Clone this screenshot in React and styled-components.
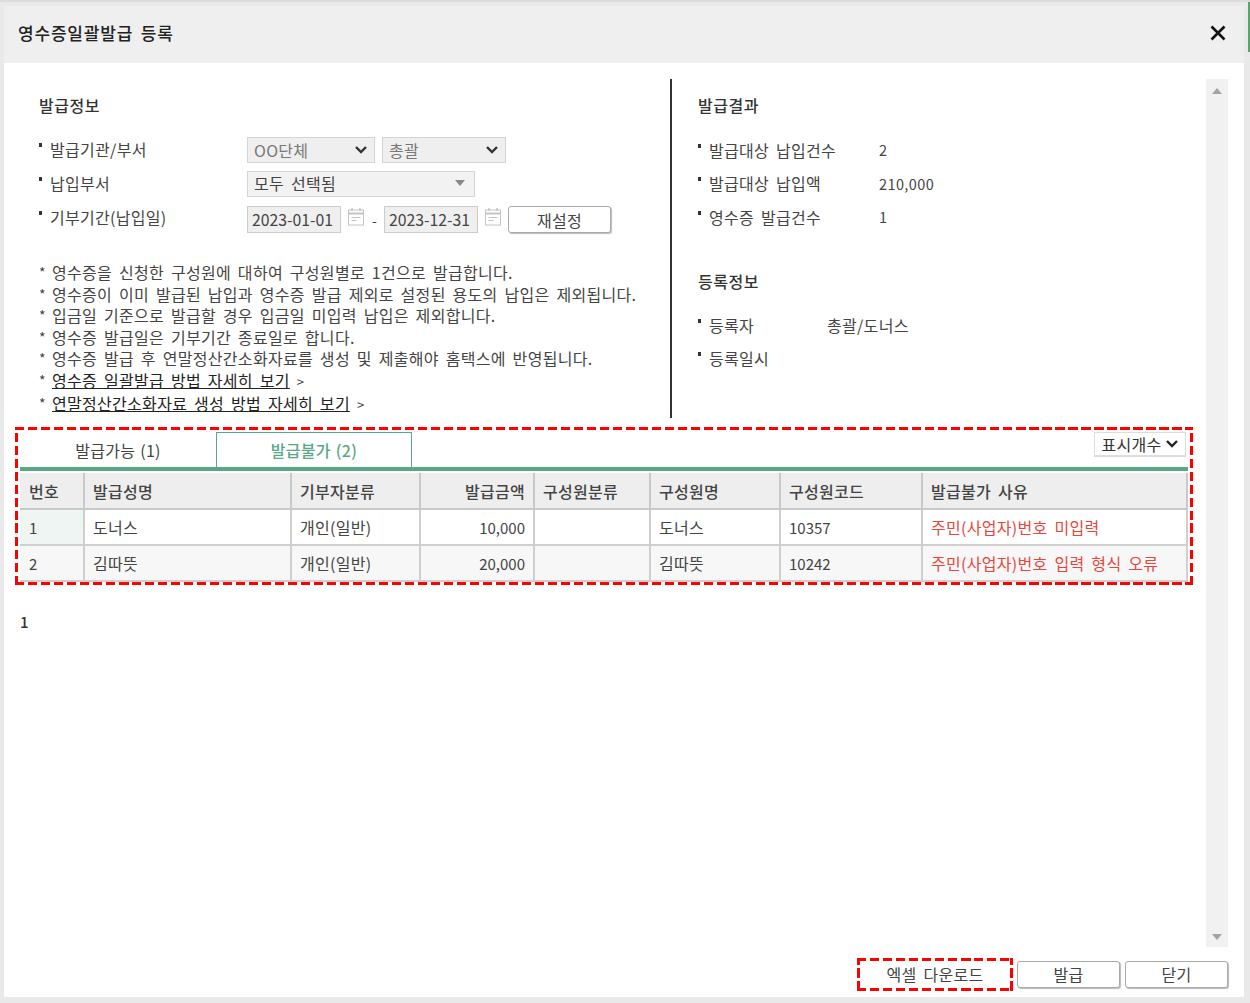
import React from "react";
import styled, { createGlobalStyle, css } from "styled-components";

const Global = createGlobalStyle`
  html, body { margin: 0; padding: 0; background: #e9e9e9; }
  body { font-family: "Noto Sans CJK KR", "Noto Sans", sans-serif; color: #333; }
  * { box-sizing: border-box; }
`;

// reference text is wider than Noto, so spread it a little
const koText = css`
  font-size: 16px;
  letter-spacing: 0.3px;
  word-spacing: 3px;
`;

// the red marker frame drawn over a block; long dashes that css dashed can't do
const redFrame = css`
  position: relative;
  &::after {
    content: "";
    position: absolute;
    inset: -3px;
    pointer-events: none;
    background:
      repeating-linear-gradient(90deg, #f00 0 9.5px, transparent 9.5px 13px) top / 100% 3px no-repeat,
      repeating-linear-gradient(90deg, #f00 0 9.5px, transparent 9.5px 13px) bottom / 100% 3px no-repeat,
      repeating-linear-gradient(0deg, #f00 0 9.5px, transparent 9.5px 13px) left / 3px 100% no-repeat,
      repeating-linear-gradient(0deg, #f00 0 9.5px, transparent 9.5px 13px) right / 3px 100% no-repeat;
  }
`;

const Page = styled.div`
  width: 1250px;
  height: 1003px;
  padding: 6px 6px 4px 4px;
  position: relative;
  overflow: hidden;
  border-top: 2px solid #dcdcdc;
`;

const EdgeMark = styled.div`
  position: absolute;
  top: 0;
  right: 0;
  width: 2px;
  height: 50px;
  background: #5aa469;
`;

const Modal = styled.div`
  height: 100%;
  background: #fff;
  display: flex;
  flex-direction: column;
  margin-top: -2px;
`;

const Header = styled.div`
  height: 57px;
  flex: none;
  background: #efefef;
  display: flex;
  align-items: center;
  justify-content: space-between;
  padding: 0 17px 4px 14px;
`;

const ModalTitle = styled.h1`
  margin: 0;
  font-size: 17px;
  letter-spacing: 0.8px;
  word-spacing: 3px;
  font-weight: 500;
  color: #222;
`;

const CloseBtn = styled.button`
  border: 0;
  background: none;
  padding: 0;
  width: 18px;
  height: 18px;
  display: flex;
`;

const Body = styled.div`
  flex: 1;
  display: flex;
  padding: 16px 16px 0 11px;
  min-height: 0;
`;

const Content = styled.div`
  flex: 1;
  min-width: 0;
  display: flex;
  flex-direction: column;
`;

const Top = styled.div`
  height: 339px;
  flex: none;
  display: flex;
`;

const LeftPane = styled.div`
  width: 657px;
  padding: 15px 0 0 24px;
  border-right: 2px solid #333;
`;

const RightPane = styled.div`
  flex: 1;
  padding: 15px 0 0 26px;
`;

const SectionTitle = styled.h2`
  margin: ${({ $mt }) => $mt || 0}px 0 0;
  font-size: 16px;
  letter-spacing: 0.5px;
  line-height: 22px;
  font-weight: 500;
  color: #333;
`;

const FormRows = styled.div`
  margin-top: ${({ $mt }) => $mt || 17}px;
  display: flex;
  flex-direction: column;
`;

const FormRow = styled.div`
  height: ${({ $h }) => $h || 34}px;
  display: flex;
  align-items: center;
`;

const Label = styled.div`
  ${koText}
  width: ${({ $w }) => $w || 208}px;
  flex: none;
  color: #444;
  padding: 0 0 ${({ $up }) => $up ?? 2}px 11px;
  position: relative;
  white-space: nowrap;
  &::before {
    content: "";
    position: absolute;
    left: 0;
    top: 6px;
    width: 3px;
    height: 4px;
    background: #333;
  }
`;

const Value = styled.div`
  font-size: 14.5px;
  letter-spacing: 0.4px;
  color: #444;
  white-space: nowrap;
`;

const NameValue = styled(Value)`
  ${koText}
`;

const SelectBox = styled.div`
  ${koText}
  width: ${({ $w }) => $w}px;
  height: 26px;
  margin-right: ${({ $mr }) => $mr || 0}px;
  border: 1px solid #d4d4d4;
  background: ${({ $dim }) => ($dim ? "#efefef" : "#f2f2f2")};
  color: ${({ $dim }) => ($dim ? "#777" : "#444")};
  display: flex;
  align-items: center;
  justify-content: space-between;
  padding: 0 6px ${({ $dim }) => ($dim ? 1 : 2)}px;
`;

const DateInput = styled.div`
  width: 94px;
  height: 27px;
  border: 1px solid #ccc;
  background: #efefef;
  color: #444;
  font-size: 15.8px;
  display: flex;
  align-items: center;
  padding-left: 4px;
`;

const Dash = styled.span`
  width: 19px;
  text-align: center;
  font-size: 14px;
  color: #444;
`;

const CalIcon = styled.svg`
  width: 18px;
  height: 20px;
  margin: -6px 0 0 6px;
  flex: none;
`;

const Btn = styled.button`
  ${koText}
  width: ${({ $w }) => $w}px;
  height: 27px;
  font-family: inherit;
  color: #444;
  background: #fff;
  border: 1px solid #aaa;
  border-radius: 3px;
  box-shadow: 1px 1px 1px #bbb;
  padding: 0;
`;

const ResetBtn = styled(Btn)`
  margin-left: 6px;
`;

const Notes = styled.ul`
  ${koText}
  list-style: none;
  margin: 24px 0 0;
  padding: 0;
  line-height: 21.6px;
  color: #444;
`;

const Note = styled.li`
  white-space: nowrap;
  padding-left: 13px;
  position: relative;
  &::before {
    content: "*";
    position: absolute;
    left: 0;
    font-size: 14px;
  }
`;

const NoteLink = styled.a`
  color: #222;
  text-decoration: underline;
`;

const Gt = styled.span`
  margin-left: 7px;
  font-size: 13px;
`;

const TableSection = styled.div`
  ${redFrame}
  margin: 12px 0 0 3px;
  width: 1172px;
  height: 152px;
  flex: none;
  padding: 2px 2px 0;
`;

const TabBar = styled.div`
  display: flex;
  align-items: flex-start;
  height: 39px;
  border-bottom: 4px solid #5aa786;
  position: relative;
`;

const Tab = styled.div`
  ${koText}
  word-spacing: 1px;
  width: ${({ $w }) => $w}px;
  height: 35px;
  display: flex;
  align-items: center;
  justify-content: center;
  color: ${({ $active }) => ($active ? "#5aa786" : "#444")};
  font-weight: ${({ $active }) => ($active ? 500 : 400)};
  border: ${({ $active }) => ($active ? "1px solid #5aa786" : "0")};
  border-bottom: 0;
`;

const CountSelect = styled.div`
  ${koText}
  position: absolute;
  right: 2px;
  top: 0;
  width: 92px;
  height: 25px;
  border: 1px solid #ddd;
  border-bottom-width: 2px;
  color: #333;
  display: flex;
  align-items: center;
  justify-content: center;
  gap: 3px;
`;

const Table = styled.table`
  border-collapse: collapse;
  table-layout: fixed;
  width: 1167px;
  margin-top: 2px;
`;

const Th = styled.th`
  ${koText}
  height: 36px;
  background: #eeeeee;
  border: 1px solid #c9c9c9;
  border-width: 0 2px 2px 0;
  font-weight: 500;
  color: #444;
  padding: 0 8px;
  text-align: ${({ $right }) => ($right ? "right" : "left")};
  white-space: nowrap;
  &:first-child { padding-left: 9px; }
`;

const Td = styled.td`
  ${koText}
  ${({ $num }) => $num && "font-size: 15px; letter-spacing: 0;"}
  height: 36px;
  border: 1px solid #cfcfcf;
  border-width: 0 2px 2px 0;
  background: ${({ $bg }) => $bg || "transparent"};
  color: ${({ $red }) => ($red ? "#e8453c" : "#444")};
  padding: 0 8px;
  text-align: ${({ $right }) => ($right ? "right" : "left")};
  white-space: nowrap;
  &:first-child { padding-left: 9px; }
`;

const Row = styled.tr`
  background: ${({ $alt }) => ($alt ? "#f7f7f7" : "#fff")};
`;

const Pager = styled.div`
  margin: 29px 0 0 5px;
  font-size: 15px;
  font-weight: 500;
  color: #333;
`;

const ScrollTrack = styled.div`
  width: 22px;
  flex: none;
  height: 868px;
  background: #f1f1f1;
  display: flex;
  flex-direction: column;
  justify-content: space-between;
  align-items: center;
  padding: 9px 0 7px;
`;

const Arrow = styled.div`
  width: 0;
  height: 0;
  border-left: 5px solid transparent;
  border-right: 5px solid transparent;
  ${({ $up }) =>
    $up ? "border-bottom: 6px solid #a3a3a3;" : "border-top: 6px solid #a3a3a3;"}
`;

const Footer = styled.div`
  flex: none;
  height: 52px;
  display: flex;
  justify-content: flex-end;
  align-items: center;
  gap: 5px;
  padding: 6px 16px 0 0;
`;

const ExcelBtn = styled(Btn)`
  ${redFrame}
  border: 0;
  box-shadow: none;
  margin-right: 2px;
`;

const Chevron = ({ dark }) => (
  <svg width="14" height="10" viewBox="0 0 14 10">
    <path d="M2 2l5 5 5-5" fill="none" stroke={dark ? "#222" : "#333"} strokeWidth="2.4" />
  </svg>
);

const Cal = () => (
  <CalIcon viewBox="0 0 18 20">
    <rect x="1.5" y="3" width="15" height="15" fill="#fff" stroke="#c4c4c4" />
    <path d="M1.5 6.5h15" stroke="#c4c4c4" strokeWidth="2" />
    <path d="M5 1v3M13 1v3" stroke="#c4c4c4" strokeWidth="1.5" />
    <path d="M4.5 10.5h9M4.5 13.5h5" stroke="#c4c4c4" />
  </CalIcon>
);

const notes = [
  "영수증을 신청한 구성원에 대하여 구성원별로 1건으로 발급합니다.",
  "영수증이 이미 발급된 납입과 영수증 발급 제외로 설정된 용도의 납입은 제외됩니다.",
  "입금일 기준으로 발급할 경우 입금일 미입력 납입은 제외합니다.",
  "영수증 발급일은 기부기간 종료일로 합니다.",
  "영수증 발급 후 연말정산간소화자료를 생성 및 제출해야 홈택스에 반영됩니다.",
];

const columns = [
  { name: "번호", w: 64 },
  { name: "발급성명", w: 207 },
  { name: "기부자분류", w: 129 },
  { name: "발급금액", w: 114, right: true },
  { name: "구성원분류", w: 116 },
  { name: "구성원명", w: 130 },
  { name: "구성원코드", w: 142 },
  { name: "발급불가 사유", w: 265 },
];

const rows = [
  { no: 1, name: "도너스", type: "개인(일반)", amount: "10,000", member: "도너스", code: "10357", reason: "주민(사업자)번호 미입력" },
  { no: 2, name: "김따뜻", type: "개인(일반)", amount: "20,000", member: "김따뜻", code: "10242", reason: "주민(사업자)번호 입력 형식 오류" },
];

export default function App() {
  return (
    <Page>
      <Global />
      <EdgeMark />
      <Modal>
        <Header>
          <ModalTitle>영수증일괄발급 등록</ModalTitle>
          <CloseBtn aria-label="닫기">
            <svg width="18" height="18" viewBox="0 0 18 18">
              <path d="M2.5 2.5l13 13M15.5 2.5l-13 13" stroke="#111" strokeWidth="2.6" />
            </svg>
          </CloseBtn>
        </Header>
        <Body>
          <Content>
            <Top>
              <LeftPane>
                <SectionTitle>발급정보</SectionTitle>
                <FormRows>
                  <FormRow>
                    <Label>발급기관/부서</Label>
                    <SelectBox $w={128} $mr={7} $dim>OO단체<Chevron /></SelectBox>
                    <SelectBox $w={124} $dim>총괄<Chevron /></SelectBox>
                  </FormRow>
                  <FormRow>
                    <Label>납입부서</Label>
                    <SelectBox $w={228}>
                      모두 선택됨
                      <svg width="16" height="10" viewBox="0 0 16 10"><path d="M3 2h10l-5 6z" fill="#888" /></svg>
                    </SelectBox>
                  </FormRow>
                  <FormRow $h={37}>
                    <Label $up={5}>기부기간(납입일)</Label>
                    <DateInput>2023-01-01</DateInput>
                    <Cal />
                    <Dash>-</Dash>
                    <DateInput>2023-12-31</DateInput>
                    <Cal />
                    <ResetBtn $w={103}>재설정</ResetBtn>
                  </FormRow>
                </FormRows>
                <Notes>
                  {notes.map((n) => <Note key={n}>{n}</Note>)}
                  <Note><NoteLink>영수증 일괄발급 방법 자세히 보기</NoteLink><Gt>&gt;</Gt></Note>
                  <Note><NoteLink>연말정산간소화자료 생성 방법 자세히 보기</NoteLink><Gt>&gt;</Gt></Note>
                </Notes>
              </LeftPane>
              <RightPane>
                <SectionTitle>발급결과</SectionTitle>
                <FormRows>
                  <FormRow $h={33.5}><Label $w={181} $up={0}>발급대상 납입건수</Label><Value>2</Value></FormRow>
                  <FormRow $h={33.5}><Label $w={181} $up={0}>발급대상 납입액</Label><Value>210,000</Value></FormRow>
                  <FormRow $h={33.5}><Label $w={181} $up={0}>영수증 발급건수</Label><Value>1</Value></FormRow>
                </FormRows>
                <SectionTitle $mt={36}>등록정보</SectionTitle>
                <FormRows $mt={17}>
                  <FormRow $h={33}><Label $w={129} $up={0}>등록자</Label><NameValue>총괄/도너스</NameValue></FormRow>
                  <FormRow $h={33}><Label $w={129} $up={0}>등록일시</Label></FormRow>
                </FormRows>
              </RightPane>
            </Top>
            <TableSection>
              <TabBar>
                <Tab $w={196}>발급가능 (1)</Tab>
                <Tab $w={196} $active>발급불가 (2)</Tab>
                <CountSelect>표시개수<Chevron dark /></CountSelect>
              </TabBar>
              <Table>
                <colgroup>
                  {columns.map((c) => <col key={c.name} width={c.w} />)}
                </colgroup>
                <thead>
                  <tr>
                    {columns.map((c) => <Th key={c.name} $right={c.right}>{c.name}</Th>)}
                  </tr>
                </thead>
                <tbody>
                  {rows.map((r, i) => (
                    <Row key={r.no} $alt={i === 1}>
                      <Td $num $bg={i === 0 ? "#eef5f2" : undefined}>{r.no}</Td>
                      <Td>{r.name}</Td>
                      <Td>{r.type}</Td>
                      <Td $num $right>{r.amount}</Td>
                      <Td />
                      <Td>{r.member}</Td>
                      <Td $num>{r.code}</Td>
                      <Td $red>{r.reason}</Td>
                    </Row>
                  ))}
                </tbody>
              </Table>
            </TableSection>
            <Pager>1</Pager>
          </Content>
          <ScrollTrack><Arrow $up /><Arrow /></ScrollTrack>
        </Body>
        <Footer>
          <ExcelBtn $w={150}>엑셀 다운로드</ExcelBtn>
          <Btn $w={103}>발급</Btn>
          <Btn $w={103}>닫기</Btn>
        </Footer>
      </Modal>
    </Page>
  );
}
